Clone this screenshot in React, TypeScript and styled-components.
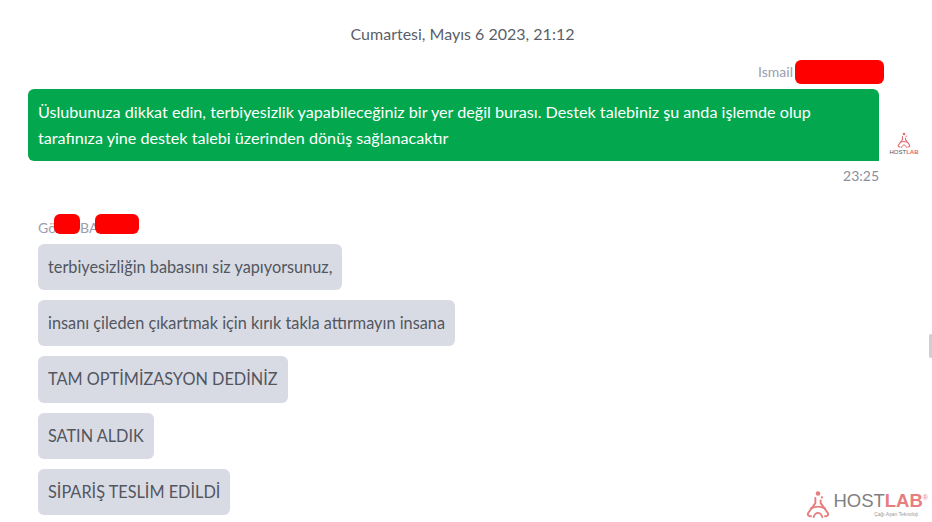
import React from "react";
import styled, { createGlobalStyle } from "styled-components";

const incoming = [
    "terbiyesizliğin babasını siz yapıyorsunuz,",
    "insanı çileden çıkartmak için kırık takla attırmayın insana",
    "TAM OPTİMİZASYON DEDİNİZ",
    "SATIN ALDIK",
    "SİPARİŞ TESLİM EDİLDİ",
];

const Mark = ({ size }: { size: number }) => (
    <svg width={size} height={size} viewBox="0 0 32 32" fill="none" stroke="#e2686b" strokeLinecap="round">
        <circle cx="16" cy="4" r="2.6" fill="#e2686b" stroke="none" />
        <circle cx="20.5" cy="8.5" r="1.3" fill="#e2686b" stroke="none" />
        <path d="M13 9v6L5 26c-1.500 2.500 0 4 3 4" strokeWidth="2.2" />
        <path d="M19 12v3l8 11c1.500 2.500 0 4-3 4" strokeWidth="2.200" />
        <path d="M8 21c5-2.500 11-2.500 16 0M11 31c1-3 3-5 5-5s4 2 5 5" strokeWidth="2" />
    </svg>
);

export default function App() {
    return (
        <Page>
            <GlobalStyle />
            <DateLine>Cumartesi, Mayıs 6 2023, 21:12</DateLine>

            <OutgoingName>
                Ismail
                <OutgoingRedaction />
            </OutgoingName>
            <OutgoingRow>
                <GreenBubble>
                    Üslubunuza dikkat edin, terbiyesizlik yapabileceğiniz bir yer değil burası. Destek talebiniz şu anda
                    işlemde olup tarafınıza yine destek talebi üzerinden dönüş sağlanacaktır
                </GreenBubble>
                <Avatar>
                    <Mark size={16} />
                    <AvatarText>
                        HOST<b>LAB</b>
                    </AvatarText>
                </Avatar>
            </OutgoingRow>
            <Time>23:25</Time>

            <IncomingName>
                Gö
                <FirstRedaction />
                BA
                <SecondRedaction />
            </IncomingName>
            <BubbleList>
                {incoming.map((text) => (
                    <GreyBubble key={text}>{text}</GreyBubble>
                ))}
            </BubbleList>

            <ScrollThumb />
            <Watermark>
                <Mark size={28} />
                <WatermarkWords>
                    <WatermarkTitle>
                        HOST<b>LAB</b>
                        <sup>®</sup>
                    </WatermarkTitle>
                    <WatermarkSub>Çağı Aşan Teknoloji</WatermarkSub>
                </WatermarkWords>
            </Watermark>
        </Page>
    );
}

const GlobalStyle = createGlobalStyle`
    html, body {
        margin: 0;
        height: 100%;
        overflow: hidden;
        background: #fff;
    }
    body {
        font-family: Lato, "Open Sans", sans-serif;
    }
`;

const Page = styled.div`
    position: relative;
    width: 932px;
    height: 522px;
    overflow: hidden;
    box-sizing: border-box;
    padding-top: 24px;
    background: #fff;
`;

const DateLine = styled.div`
    width: 925px;
    text-align: center;
    font-size: 16px;
    line-height: 20px;
    color: #5a5f69;
`;

const OutgoingName = styled.div`
    display: flex;
    justify-content: flex-end;
    align-items: flex-start;
    gap: 2px;
    height: 24px;
    margin-top: 16px;
    padding-right: 48px;
    font-size: 14px;
    line-height: 23px;
    color: #9a9eae;
`;

const OutgoingRedaction = styled.span`
    width: 89px;
    height: 24px;
    border-radius: 6px;
    background: #ff0000;
`;

const OutgoingRow = styled.div`
    display: flex;
    align-items: flex-end;
    margin: 5px 0 0 28px;
`;

const GreenBubble = styled.div`
    box-sizing: border-box;
    width: 851px;
    height: 72px;
    padding: 10px 60px 10px 10px;
    border-radius: 6px 6px 0 6px;
    background: #03a84e;
    color: #fff;
    font-size: 16.15px;
    line-height: 26px;
`;

const Avatar = styled.div`
    display: flex;
    flex-direction: column;
    align-items: center;
    width: 30px;
    margin: 0 0 5px 10px;
`;

const AvatarText = styled.div`
    font-family: "Liberation Sans", sans-serif;
    font-size: 6px;
    line-height: 8px;
    color: #555;
    white-space: nowrap;

    b {
        color: #e2686b;
    }
`;

const Time = styled.div`
    width: 879px;
    margin-top: 6px;
    text-align: right;
    font-size: 14px;
    line-height: 18px;
    color: #8a8e9c;
`;

const IncomingName = styled.div`
    display: flex;
    align-items: flex-start;
    height: 20px;
    margin: 29px 0 0 38px;
    font-size: 14px;
    line-height: 28px;
    color: #9a9eae;
`;

const FirstRedaction = styled.span`
    width: 26px;
    height: 20px;
    margin-left: -2px;
    border-radius: 6px;
    background: #ff0000;
`;

const SecondRedaction = styled.span`
    width: 44px;
    height: 20px;
    margin-left: -3px;
    border-radius: 6px;
    background: #ff0000;
`;

const BubbleList = styled.div`
    display: flex;
    flex-direction: column;
    align-items: flex-start;
    gap: 10px;
    margin: 9.500px 0 0 38px;
`;

const GreyBubble = styled.div`
    box-sizing: border-box;
    height: 46.4px;
    padding: 10px;
    border-radius: 6px;
    background: #d9dbe4;
    color: #525660;
    font-size: 16.3px;
    line-height: 26px;
    white-space: nowrap;
`;

const ScrollThumb = styled.div`
    position: absolute;
    top: 334px;
    right: 0;
    width: 3px;
    height: 24px;
    border-radius: 2px 0 0 2px;
    background: #cfcfcf;
`;

const Watermark = styled.div`
    position: absolute;
    right: 4px;
    bottom: 4px;
    display: flex;
    align-items: center;
    gap: 1px;
    opacity: 0.85;
`;

const WatermarkWords = styled.div`
    display: flex;
    flex-direction: column;
    align-items: flex-end;
`;

const WatermarkTitle = styled.div`
    font-family: "Liberation Sans", sans-serif;
    font-size: 18.5px;
    line-height: 21px;
    color: #6b6b6b;

    b {
        color: #e2686b;
        font-weight: 700;
    }

    sup {
        font-size: 7px;
        line-height: 0;
        color: #e2686b;
    }
`;

const WatermarkSub = styled.div`
    font-family: "Liberation Sans", sans-serif;
    font-size: 5px;
    line-height: 7px;
    margin-right: 10px;
    color: #888;
`;
